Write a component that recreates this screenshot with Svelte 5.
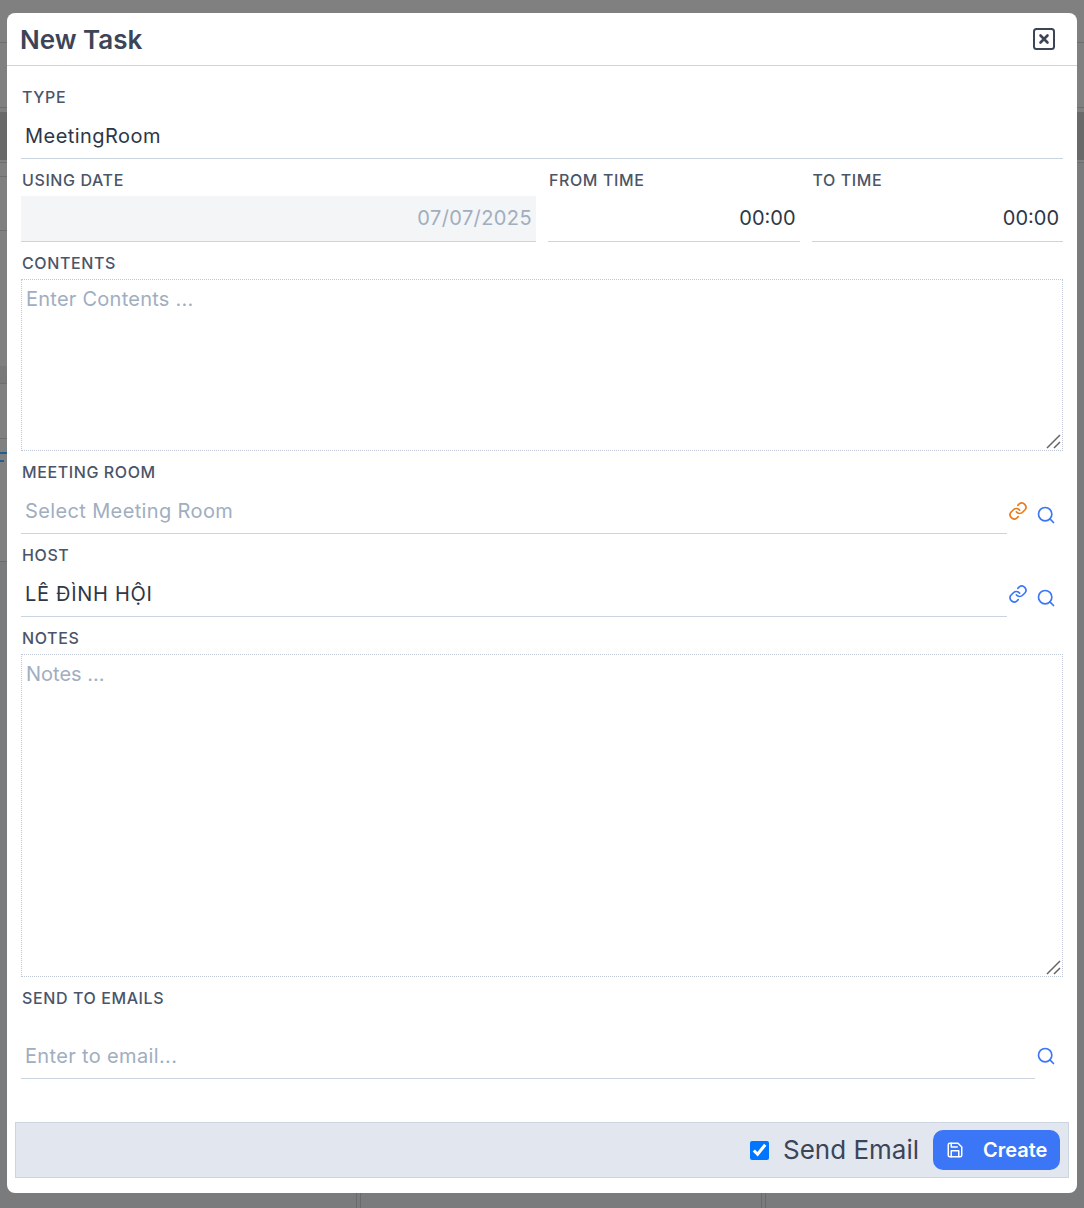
<script>
    let contents = '';
    let notes = '';
    let sendEmail = true;

    // what shows of the page behind the overlay
    const ghosts = [
        { x: 0, y: 163, w: 7, h: 398, c: '#808080' },
        { x: 0, y: 42, w: 1084, h: 1, c: '#6e6e6e' },
        { x: 0, y: 107, w: 1084, h: 1, c: '#6e6e6e' },
        { x: 0, y: 112, w: 1084, h: 48, c: '#696969' },
        { x: 0, y: 162, w: 1084, h: 1, c: '#6e6e6e' },
        { x: 0, y: 176, w: 7, h: 1, c: '#6e6e6e' },
        { x: 0, y: 230, w: 7, h: 1, c: '#6e6e6e' },
        { x: 0, y: 366, w: 7, h: 17, c: '#797979' },
        { x: 0, y: 383, w: 7, h: 1, c: '#6e6e6e' },
        { x: 0, y: 438, w: 7, h: 1, c: '#6e6e6e' },
        { x: 0, y: 452, w: 7, h: 2, c: '#1d5f95' },
        { x: 0, y: 460, w: 4, h: 2, c: '#1d5f95' },
        { x: 0, y: 561, w: 7, h: 1, c: '#686c78' },
        { x: 356, y: 1193, w: 1, h: 15, c: '#6a6a6a' },
        { x: 360, y: 1193, w: 1, h: 15, c: '#6a6a6a' },
        { x: 761, y: 1193, w: 1, h: 15, c: '#6a6a6a' },
        { x: 765, y: 1193, w: 1, h: 15, c: '#6a6a6a' }
    ];
</script>

<div class="backdrop">
    {#each ghosts as g}
        <i class="ghost" style="left:{g.x}px;top:{g.y}px;width:{g.w}px;height:{g.h}px;background:{g.c}"></i>
    {/each}
    <div class="modal">
        <header>
            <h2>New Task</h2>
            <button class="close" aria-label="Close">
                <svg width="24" height="24" viewBox="0 0 24 24" fill="none" stroke="#3c4558" stroke-linecap="round" stroke-linejoin="round">
                    <rect x="2" y="2" width="20" height="20" rx="2.5" stroke-width="2" />
                    <path d="M8.5 8.5l7 7M15.5 8.5l-7 7" stroke-width="2.6" />
                </svg>
            </button>
        </header>

        <div class="body">
            <div class="field">
                <label for="type">TYPE</label>
                <input id="type" class="line type" value="MeetingRoom" readonly />
            </div>

            <div class="row">
                <div class="field date">
                    <label for="date">USING DATE</label>
                    <input id="date" class="line short right disabled" value="07/07/2025" readonly />
                </div>
                <div class="field time">
                    <label for="from">FROM TIME</label>
                    <input id="from" class="line short right" value="00:00" readonly />
                </div>
                <div class="field time">
                    <label for="to">TO TIME</label>
                    <input id="to" class="line short right" value="00:00" readonly />
                </div>
            </div>

            <div class="field">
                <label for="contents">CONTENTS</label>
                <div class="area">
                    <textarea id="contents" class="contents" placeholder="Enter Contents ..." bind:value={contents}></textarea>
                    <svg class="grip" width="16" height="16" viewBox="0 0 16 16" fill="none" stroke="#666" stroke-width="1.5">
                        <path d="M1 15L14 2M8 15l6-6" />
                    </svg>
                </div>
            </div>

            <div class="field">
                <label for="room">MEETING ROOM</label>
                <div class="lookup">
                    <input id="room" class="line room" placeholder="Select Meeting Room" readonly />
                    <svg class="link" width="20" height="20" viewBox="0 0 24 24" fill="none" stroke="#ea7a1a" stroke-width="2" stroke-linecap="round" stroke-linejoin="round">
                        <path d="M10 13a5 5 0 0 0 7.5.5l3-3a5 5 0 0 0-7-7l-1.7 1.7" />
                        <path d="M14 11a5 5 0 0 0-7.5-.5l-3 3a5 5 0 0 0 7 7l1.7-1.7" />
                    </svg>
                    <svg class="search" width="20" height="20" viewBox="0 0 24 24" fill="none" stroke="#3b76f6" stroke-width="2" stroke-linecap="round">
                        <circle cx="11" cy="11" r="8" />
                        <path d="M21 21l-4.3-4.3" />
                    </svg>
                </div>
            </div>

            <div class="field">
                <label for="host">HOST</label>
                <div class="lookup">
                    <input id="host" class="line host" value="LÊ ĐÌNH HỘI" readonly />
                    <svg class="link" width="20" height="20" viewBox="0 0 24 24" fill="none" stroke="#3b76f6" stroke-width="2" stroke-linecap="round" stroke-linejoin="round">
                        <path d="M10 13a5 5 0 0 0 7.5.5l3-3a5 5 0 0 0-7-7l-1.7 1.7" />
                        <path d="M14 11a5 5 0 0 0-7.5-.5l-3 3a5 5 0 0 0 7 7l1.7-1.7" />
                    </svg>
                    <svg class="search" width="20" height="20" viewBox="0 0 24 24" fill="none" stroke="#3b76f6" stroke-width="2" stroke-linecap="round">
                        <circle cx="11" cy="11" r="8" />
                        <path d="M21 21l-4.3-4.3" />
                    </svg>
                </div>
            </div>

            <div class="field">
                <label for="notes">NOTES</label>
                <div class="area">
                    <textarea id="notes" class="notes" placeholder="Notes ..." bind:value={notes}></textarea>
                    <svg class="grip" width="16" height="16" viewBox="0 0 16 16" fill="none" stroke="#666" stroke-width="1.5">
                        <path d="M1 15L14 2M8 15l6-6" />
                    </svg>
                </div>
            </div>

            <div class="field emails">
                <label for="email">SEND TO EMAILS</label>
                <div class="lookup">
                    <input id="email" class="line email" placeholder="Enter to email..." readonly />
                    <svg class="search" width="20" height="20" viewBox="0 0 24 24" fill="none" stroke="#3b76f6" stroke-width="2" stroke-linecap="round">
                        <circle cx="11" cy="11" r="8" />
                        <path d="M21 21l-4.3-4.3" />
                    </svg>
                </div>
            </div>
        </div>

        <footer>
            <label class="check">
                <input type="checkbox" bind:checked={sendEmail} />
                <span>Send Email</span>
            </label>
            <button class="create">
                <svg width="18" height="18" viewBox="0 0 24 24" fill="none" stroke="#fff" stroke-width="2" stroke-linecap="round" stroke-linejoin="round">
                    <path d="M19 21H5a2 2 0 0 1-2-2V5a2 2 0 0 1 2-2h11l5 5v11a2 2 0 0 1-2 2z" />
                    <path d="M17 21v-8H7v8M7 3v5h8" />
                </svg>
                Create
            </button>
        </footer>
    </div>
</div>

<style>
    :global(body) {
        margin: 0;
        font-family: Inter, sans-serif;
    }

    .backdrop {
        position: relative;
        width: 1084px;
        height: 1208px;
        box-sizing: border-box;
        padding: 13px 7px 15px;
        background: linear-gradient(#808080 0 163px, #7a7b7c 163px);
        overflow: hidden;
    }

    .ghost {
        position: absolute;
    }

    .modal {
        position: relative;
        height: 100%;
        display: flex;
        flex-direction: column;
        background: #fff;
        border-radius: 8px;
        overflow: hidden;
    }

    header {
        height: 53px;
        flex: none;
        box-sizing: border-box;
        display: flex;
        align-items: center;
        justify-content: space-between;
        padding: 0 21px 0 13px;
        border-bottom: 1px solid #cbd5e0;
    }

    h2 {
        margin: 0;
        font-size: 26px;
        font-weight: 600;
        color: #3c4558;
    }

    .close {
        display: flex;
        padding: 0;
        border: none;
        background: none;
    }

    .body {
        flex: 1;
        padding: 21px 14px 0;
    }

    .field {
        display: flex;
        flex-direction: column;
    }

    label {
        font-size: 16px;
        line-height: 20px;
        font-weight: 500;
        letter-spacing: 0.6px;
        color: #4a5568;
        padding-left: 1px;
    }

    .line {
        width: 100%;
        min-width: 0;
        height: 52px;
        box-sizing: border-box;
        padding: 6px 4px 0;
        border: none;
        border-bottom: 1px solid #cbd5e0;
        outline: none;
        font: 400 20px Inter, sans-serif;
        color: #2d3748;
        background: #fff;
    }

    .line::placeholder,
    textarea::placeholder {
        color: #a0aec0;
        opacity: 1;
    }

    .type { letter-spacing: 0.45px; }
    .room { letter-spacing: 0.37px; }
    .host { letter-spacing: 0.7px; }
    .email { letter-spacing: 0.35px; }
    .contents { letter-spacing: 0.25px; }

    .short {
        height: 46px;
        margin-top: 6px;
        padding: 0 4px 2px;
    }

    .right {
        text-align: right;
    }

    .disabled {
        background: #f4f5f7;
        color: #a0aec0;
        letter-spacing: 0.4px;
    }

    .row {
        display: flex;
        gap: 12px;
        margin: 11px 0;
    }

    .date {
        width: 515px;
    }

    .time {
        flex: 1;
    }

    .area {
        position: relative;
        margin-top: 6px;
        margin-bottom: 11px;
    }

    textarea {
        box-sizing: border-box;
        display: block;
        width: 100%;
        border: 1px dotted #bfc6d6;
        outline: none;
        padding: 7px 4px 6px;
        font: 400 20px Inter, sans-serif;
        color: #2d3748;
        resize: none;
    }

    .grip {
        position: absolute;
        right: 1px;
        bottom: 2px;
        pointer-events: none;
    }

    .contents {
        height: 172px;
    }

    .notes {
        height: 323px;
    }

    .lookup {
        display: flex;
        align-items: center;
        margin-bottom: 11px;
    }

    .link {
        flex: none;
        margin: 6px 1px 0 1px;
    }

    .search {
        flex: none;
        margin: 14px 7px 0 7px;
    }

    .emails .lookup {
        margin-top: 19px;
    }

    .emails .search {
        margin: 6px 7px 0 1px;
    }

    footer {
        flex: none;
        height: 56px;
        margin: 0 8px 15px;
        box-sizing: border-box;
        display: flex;
        align-items: center;
        justify-content: flex-end;
        gap: 14px;
        padding-right: 8px;
        background: #e2e6ef;
        border: 1px solid #cbd5e0;
    }

    .check {
        display: flex;
        align-items: center;
        gap: 14px;
        padding: 0;
        font-size: 26px;
        font-weight: 400;
        letter-spacing: 0;
        color: #3c4558;
    }

    .check input {
        width: 19px;
        height: 19px;
        margin: 0;
        accent-color: #0075ff;
    }

    .create {
        width: 127px;
        height: 40px;
        display: flex;
        align-items: center;
        gap: 19px;
        padding: 0 0 0 13px;
        border: none;
        border-radius: 10px;
        background: #3b76f6;
        color: #fff;
        font: 600 20px Inter, sans-serif;
    }
</style>
